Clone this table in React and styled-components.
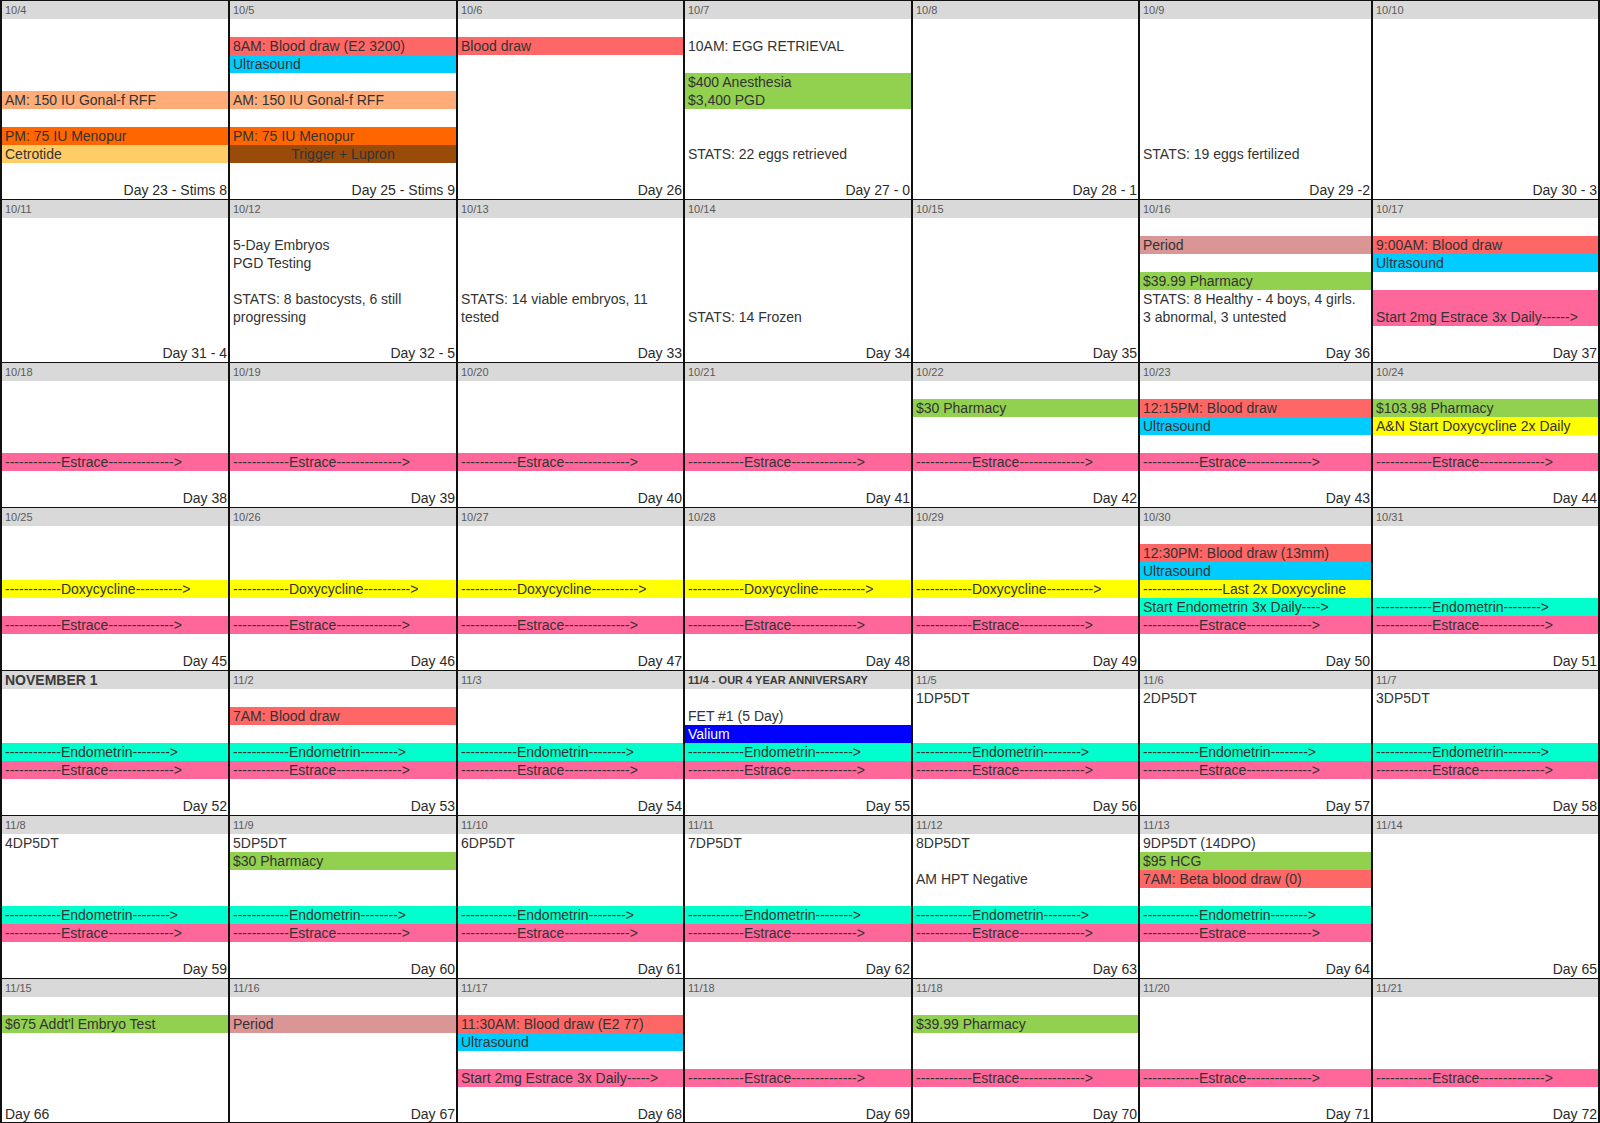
import React from "react";
import styled, { createGlobalStyle } from "styled-components";

const RED = "#ff6666";
const BLUE = "#00ccff";
const PEACH = "#ffac78";
const ORANGE = "#ff6600";
const GOLD = "#ffcc66";
const BROWN = "#994c0a";
const GREEN = "#92d050";
const PERIOD = "#da9694";
const PINK = "#ff6699";
const YELLOW = "#ffff00";
const AQUA = "#00ffcc";
const VALIUM = "#0000ff";

const estrace = (r) => ({ r, text: "------------Estrace-------------->", bg: PINK });
const endo = (r) => ({ r, text: "------------Endometrin-------->", bg: AQUA });
const doxy = (r) => ({ r, text: "------------Doxycycline---------->", bg: YELLOW });
const note = (r, text) => ({ r, text });

const weeks = [
  {
    rows: 9,
    days: [
      { date: "10/4", day: "Day 23 - Stims 8", items: [
        { r: 5, text: "AM: 150 IU Gonal-f RFF", bg: PEACH },
        { r: 7, text: "PM: 75 IU Menopur", bg: ORANGE },
        { r: 8, text: "Cetrotide", bg: GOLD },
      ] },
      { date: "10/5", day: "Day 25 - Stims 9", items: [
        { r: 2, text: "8AM: Blood draw (E2 3200)", bg: RED },
        { r: 3, text: "Ultrasound", bg: BLUE },
        { r: 5, text: "AM: 150 IU Gonal-f RFF", bg: PEACH },
        { r: 7, text: "PM: 75 IU Menopur", bg: ORANGE },
        { r: 8, text: "Trigger + Lupron", bg: BROWN, align: "center" },
      ] },
      { date: "10/6", day: "Day 26", items: [{ r: 2, text: "Blood draw", bg: RED }] },
      { date: "10/7", day: "Day 27 - 0", items: [
        note(2, "10AM: EGG RETRIEVAL"),
        { r: 4, text: "$400 Anesthesia", bg: GREEN },
        { r: 5, text: "$3,400 PGD", bg: GREEN },
        note(8, "STATS: 22 eggs retrieved"),
      ] },
      { date: "10/8", day: "Day 28 - 1", items: [] },
      { date: "10/9", day: "Day 29 -2", items: [note(8, "STATS: 19 eggs fertilized")] },
      { date: "10/10", day: "Day 30 - 3", items: [] },
    ],
  },
  {
    rows: 7,
    days: [
      { date: "10/11", day: "Day 31 - 4", items: [] },
      { date: "10/12", day: "Day 32 - 5", items: [
        note(2, "5-Day Embryos"),
        note(3, "PGD Testing"),
        note(5, "STATS: 8 bastocysts, 6 still"),
        note(6, "progressing"),
      ] },
      { date: "10/13", day: "Day 33", items: [
        note(5, "STATS: 14 viable embryos, 11"),
        note(6, "tested"),
      ] },
      { date: "10/14", day: "Day 34", items: [note(6, "STATS: 14 Frozen")] },
      { date: "10/15", day: "Day 35", items: [] },
      { date: "10/16", day: "Day 36", items: [
        { r: 2, text: "Period", bg: PERIOD },
        { r: 4, text: "$39.99 Pharmacy", bg: GREEN },
        note(5, "STATS: 8 Healthy - 4 boys, 4 girls."),
        note(6, "3 abnormal, 3 untested"),
      ] },
      { date: "10/17", day: "Day 37", items: [
        { r: 2, text: "9:00AM: Blood draw", bg: RED },
        { r: 3, text: "Ultrasound", bg: BLUE },
        { r: 5, span: 2, text: "Start 2mg Estrace 3x Daily------>", bg: PINK },
      ] },
    ],
  },
  {
    rows: 6,
    days: [
      { date: "10/18", day: "Day 38", items: [estrace(5)] },
      { date: "10/19", day: "Day 39", items: [estrace(5)] },
      { date: "10/20", day: "Day 40", items: [estrace(5)] },
      { date: "10/21", day: "Day 41", items: [estrace(5)] },
      { date: "10/22", day: "Day 42", items: [{ r: 2, text: "$30 Pharmacy", bg: GREEN }, estrace(5)] },
      { date: "10/23", day: "Day 43", items: [
        { r: 2, text: "12:15PM: Blood draw", bg: RED },
        { r: 3, text: "Ultrasound", bg: BLUE },
        estrace(5),
      ] },
      { date: "10/24", day: "Day 44", items: [
        { r: 2, text: "$103.98 Pharmacy", bg: GREEN },
        { r: 3, text: "A&N Start Doxycycline 2x Daily", bg: YELLOW },
        estrace(5),
      ] },
    ],
  },
  {
    rows: 7,
    days: [
      { date: "10/25", day: "Day 45", items: [doxy(4), estrace(6)] },
      { date: "10/26", day: "Day 46", items: [doxy(4), estrace(6)] },
      { date: "10/27", day: "Day 47", items: [doxy(4), estrace(6)] },
      { date: "10/28", day: "Day 48", items: [doxy(4), estrace(6)] },
      { date: "10/29", day: "Day 49", items: [doxy(4), estrace(6)] },
      { date: "10/30", day: "Day 50", items: [
        { r: 2, text: "12:30PM: Blood draw (13mm)", bg: RED },
        { r: 3, text: "Ultrasound", bg: BLUE },
        { r: 4, text: "-----------------Last 2x Doxycycline", bg: YELLOW },
        { r: 5, text: "Start Endometrin 3x Daily---->", bg: AQUA },
        estrace(6),
      ] },
      { date: "10/31", day: "Day 51", items: [endo(5), estrace(6)] },
    ],
  },
  {
    rows: 6,
    days: [
      { date: "NOVEMBER 1", head: "month", day: "Day 52", items: [endo(4), estrace(5)] },
      { date: "11/2", day: "Day 53", items: [{ r: 2, text: "7AM: Blood draw", bg: RED }, endo(4), estrace(5)] },
      { date: "11/3", day: "Day 54", items: [endo(4), estrace(5)] },
      { date: "11/4 - OUR 4 YEAR ANNIVERSARY", head: "bold", day: "Day 55", items: [
        note(2, "FET #1 (5 Day)"),
        { r: 3, text: "Valium", bg: VALIUM, color: "#ffffff" },
        endo(4),
        estrace(5),
      ] },
      { date: "11/5", day: "Day 56", items: [note(1, "1DP5DT"), endo(4), estrace(5)] },
      { date: "11/6", day: "Day 57", items: [note(1, "2DP5DT"), endo(4), estrace(5)] },
      { date: "11/7", day: "Day 58", items: [note(1, "3DP5DT"), endo(4), estrace(5)] },
    ],
  },
  {
    rows: 7,
    days: [
      { date: "11/8", day: "Day 59", items: [note(1, "4DP5DT"), endo(5), estrace(6)] },
      { date: "11/9", day: "Day 60", items: [note(1, "5DP5DT"), { r: 2, text: "$30 Pharmacy", bg: GREEN }, endo(5), estrace(6)] },
      { date: "11/10", day: "Day 61", items: [note(1, "6DP5DT"), endo(5), estrace(6)] },
      { date: "11/11", day: "Day 62", items: [note(1, "7DP5DT"), endo(5), estrace(6)] },
      { date: "11/12", day: "Day 63", items: [note(1, "8DP5DT"), note(3, "AM HPT Negative"), endo(5), estrace(6)] },
      { date: "11/13", day: "Day 64", items: [
        note(1, "9DP5DT (14DPO)"),
        { r: 2, text: "$95 HCG", bg: GREEN },
        { r: 3, text: "7AM: Beta blood draw (0)", bg: RED },
        endo(5),
        estrace(6),
      ] },
      { date: "11/14", day: "Day 65", items: [] },
    ],
  },
  {
    rows: 6,
    last: true,
    days: [
      { date: "11/15", day: "Day 66", dayAlign: "left", items: [{ r: 2, text: "$675 Addt'l Embryo Test", bg: GREEN }] },
      { date: "11/16", day: "Day 67", items: [{ r: 2, text: "Period", bg: PERIOD }] },
      { date: "11/17", day: "Day 68", items: [
        { r: 2, text: "11:30AM: Blood draw (E2 77)", bg: RED },
        { r: 3, text: "Ultrasound", bg: BLUE },
        { r: 5, text: "Start 2mg Estrace 3x Daily----->", bg: PINK },
      ] },
      { date: "11/18", day: "Day 69", items: [estrace(5)] },
      { date: "11/18", day: "Day 70", items: [{ r: 2, text: "$39.99 Pharmacy", bg: GREEN }, estrace(5)] },
      { date: "11/20", day: "Day 71", items: [estrace(5)] },
      { date: "11/21", day: "Day 72", items: [estrace(5)] },
    ],
  },
];

const GlobalStyle = createGlobalStyle`
  html, body {
    margin: 0;
    padding: 0;
    background: #ffffff;
  }
  body {
    font-family: "Liberation Sans", Arial, sans-serif;
    color: #333333;
  }
`;

const Calendar = styled.div`
  width: 1600px;
  box-sizing: border-box;
  background: #111111;
  padding: 1px 0 1px 2px;
  display: flex;
  flex-direction: column;
  gap: 1px;
`;

const Week = styled.div`
  display: grid;
  grid-template-columns: 226px 226px 225px 226px 225px 231px 225px;
  column-gap: 2px;
`;

const Cell = styled.div`
  background: #ffffff;
  display: flex;
  flex-direction: column;
  min-width: 0;
`;

const DateBar = styled.div`
  height: 18px;
  line-height: 18px;
  background: #d9d9d9;
  padding-left: 3px;
  font-size: ${(p) => (p.$kind === "month" ? "14px" : "11px")};
  font-weight: ${(p) => (p.$kind ? "bold" : "normal")};
  color: ${(p) => (p.$kind ? "#3a3a3a" : "#5a5a5a")};
  white-space: nowrap;
  overflow: hidden;
`;

const Slot = styled.div`
  height: ${(p) => p.$span * 18}px;
  background: ${(p) => p.$bg || "transparent"};
  color: ${(p) => p.$color || "#333333"};
  font-size: 14px;
  line-height: 18px;
  padding: 0 3px;
  display: flex;
  align-items: flex-end;
  justify-content: ${(p) => (p.$align === "center" ? "center" : "flex-start")};
  white-space: nowrap;
  overflow: hidden;
`;

const DayLabel = styled.div`
  height: ${(p) => (p.$short ? 17 : 18)}px;
  line-height: 18px;
  font-size: 14px;
  color: #2a2a2a;
  text-align: ${(p) => p.$align || "right"};
  padding: 0 1px 0 3px;
  white-space: nowrap;
  overflow: hidden;
`;

function DayCell({ data, rows, last }) {
  const slots = [];
  let r = 1;
  while (r <= rows) {
    const item = data.items.find((it) => it.r === r);
    if (item) {
      const span = item.span || 1;
      slots.push(
        <Slot key={r} $span={span} $bg={item.bg} $color={item.color} $align={item.align}>
          {item.text}
        </Slot>
      );
      r += span;
    } else {
      slots.push(<Slot key={r} $span={1} />);
      r += 1;
    }
  }
  return (
    <Cell>
      <DateBar $kind={data.head}>{data.date}</DateBar>
      {slots}
      <DayLabel $align={data.dayAlign} $short={last}>{data.day}</DayLabel>
    </Cell>
  );
}

function App() {
  return (
    <>
      <GlobalStyle />
      <Calendar>
        {weeks.map((week, i) => (
          <Week key={i}>
            {week.days.map((d, j) => (
              <DayCell key={j} data={d} rows={week.rows} last={week.last} />
            ))}
          </Week>
        ))}
      </Calendar>
    </>
  );
}

export default App;
